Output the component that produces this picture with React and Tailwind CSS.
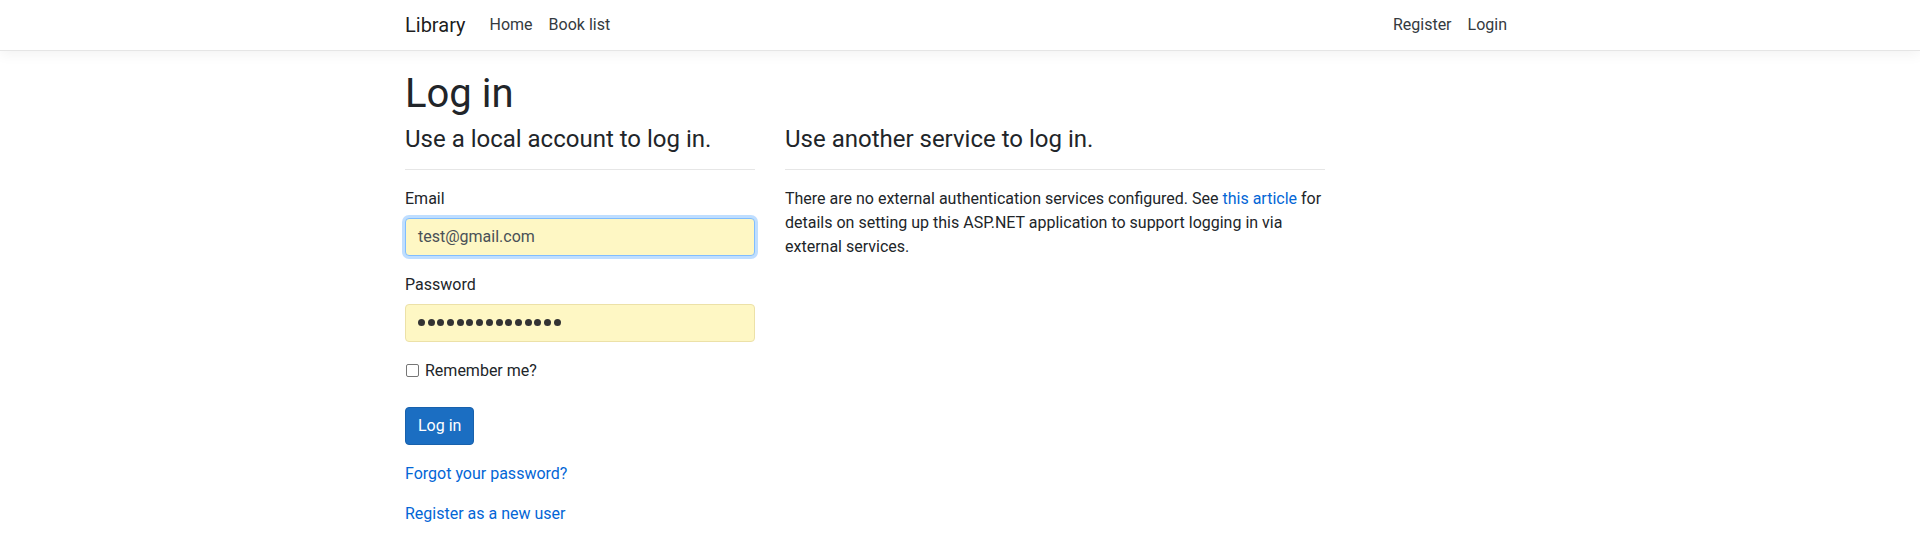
import React from 'react';

const FONT = "font-['Segoe_UI',Roboto,'Liberation_Sans',sans-serif]";

function Navbar() {
  return (
    <header className="h-[51px] bg-white border-b border-[#e5e5e5] shadow-[0_4px_12px_rgba(0,0,0,0.05)]">
      <div className="mx-auto w-[1110px] h-full flex items-center justify-between pb-px">
        <div className="flex items-center">
          <a className="text-[20px] leading-[30px] text-[rgba(0,0,0,0.9)] mr-[16px]">Library</a>
          <nav className="flex text-[16px] leading-6 text-[#343a40]">
            <a className="px-2">Home</a>
            <a className="px-2">Book list</a>
          </nav>
        </div>
        <nav className="flex text-[16px] leading-6 text-[#343a40]">
          <a className="px-2">Register</a>
          <a className="px-2">Login</a>
        </nav>
      </div>
    </header>
  );
}

function PasswordDots({ count }) {
  return (
    <div className="flex items-center gap-[2.7px]">
      {Array.from({ length: count }).map((_, i) => (
        <span key={i} className="w-[7px] h-[7px] rounded-full bg-[#333333]" />
      ))}
    </div>
  );
}

function LocalLogin() {
  return (
    <section className="w-[350px]">
      <h4 className="text-[24px] leading-[1.2] pt-[2px] mb-2">Use a local account to log in.</h4>
      <hr className="mt-[15px] mb-4 border-0 border-t border-[#e6e6e6]" />

      {/* Email */}
      <div className="mb-4">
        <label className="block text-[16px] leading-6 pt-px mb-[7px]">Email</label>
        <div className="h-[38px] flex items-center px-3 pt-px rounded-[4px] border border-[#80bdff] bg-[#fef7c4] shadow-[0_0_0_3px_rgba(0,123,255,0.25)] text-[16px] text-[#495057]">
          test@gmail.com
        </div>
      </div>

      {/* Password */}
      <div className="mb-4">
        <label className="block text-[16px] leading-6 pt-px mb-[7px]">Password</label>
        <div className="h-[38px] flex items-center px-3 rounded-[4px] border border-[#ece1a8] bg-[#fef7c4]">
          <PasswordDots count={15} />
        </div>
      </div>

      <div className="mb-6 flex items-center text-[16px] leading-6">
        <span className="w-[13px] h-[13px] ml-px mr-[6px] rounded-[2px] border border-[#767676] bg-white" />
        <span className="pt-px">Remember me?</span>
      </div>

      <div className="mb-4">
        <button className="h-[38px] px-3 pt-px rounded-[4px] bg-[#1b6ec2] border border-[#1861ac] text-white text-[16px] leading-6">
          Log in
        </button>
      </div>

      <p className="pt-px mb-[15px] leading-6 text-[#0366d6]">
        <a>Forgot your password?</a>
      </p>
      <p className="pt-px mb-[15px] leading-6 text-[#0366d6]">
        <a>Register as a new user</a>
      </p>
    </section>
  );
}

function ExternalLogin() {
  return (
    <section className="w-[540px]">
      <h4 className="text-[24px] leading-[1.2] pt-[2px] mb-2">Use another service to log in.</h4>
      <hr className="mt-[15px] mb-4 border-0 border-t border-[#e6e6e6]" />
      <p className="text-[16px] leading-6 pt-px">
        There are no external authentication services configured. See <a className="text-[#0366d6]">this article</a> for
        <br />
        details on setting up this ASP.NET application to support logging in via
        <br />
        external services.
      </p>
    </section>
  );
}

export default function App() {
  return (
    <div className={`min-h-[546px] bg-white text-[#212529] ${FONT}`}>
      <Navbar />
      <main className="mx-auto w-[1110px] pt-4">
        <h1 className="text-[40px] leading-[1.2] pt-[3px] mb-[5px]">Log in</h1>
        <div className="flex gap-[30px]">
          <LocalLogin />
          <ExternalLogin />
        </div>
      </main>
    </div>
  );
}
